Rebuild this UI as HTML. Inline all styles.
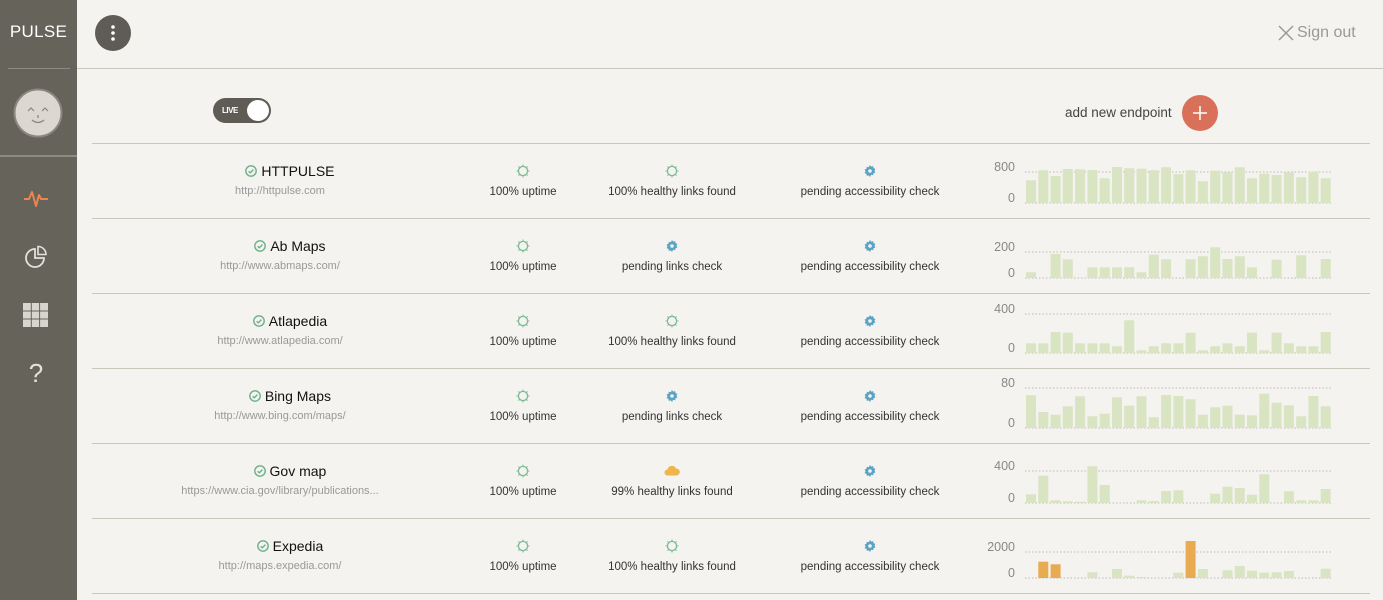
<!DOCTYPE html>
<html><head><meta charset="utf-8"><style>
*{margin:0;padding:0;box-sizing:border-box}
body{width:1383px;height:600px;overflow:hidden;background:#f4f3ef;font-family:"Liberation Sans",sans-serif;position:relative}
#side{position:absolute;left:0;top:0;width:77px;height:600px;background:#66635b}
.abs{position:absolute}
.t{position:absolute;text-align:center;white-space:nowrap}
</style></head><body>
<div id="side">
  <div class="t" style="left:0;width:77px;top:22px;color:#fff;font-size:17px;letter-spacing:0.3px">PULSE</div>
  <div class="abs" style="left:8px;top:68px;width:62px;height:1px;background:#8d8a82"></div>
  <svg class="abs" style="left:13px;top:88px" width="50" height="50"><circle cx="25" cy="25" r="23.5" fill="#dcd8d1" stroke="#8a8780" stroke-width="2"/><path d="M15 23l3-3 3 3M29 23l3-3 3 3" fill="none" stroke="#8a857c" stroke-width="1.2"/><path d="M25 27v3" stroke="#8a857c" stroke-width="1.3"/><path d="M19 32q6 5 12 0" fill="none" stroke="#8a857c" stroke-width="1.3"/></svg>
  <div class="abs" style="left:0;top:155px;width:77px;height:2px;background:#8d8a82"></div>
  <svg class="abs" style="left:23px;top:186px" width="26" height="24"><path d="M1 13h5l3-7 4 14 3-11 2 4h7" fill="none" stroke="#ea8550" stroke-width="2" stroke-linejoin="round"/></svg>
  <svg class="abs" style="left:24px;top:245px" width="26" height="26"><path d="M11 4a9 9 0 1 0 9 9h-9z" fill="none" stroke="#e4e1db" stroke-width="1.8"/><path d="M14 1.5a8 8 0 0 1 8 8h-8z" fill="none" stroke="#e4e1db" stroke-width="1.6"/></svg>
  <svg class="abs" style="left:23px;top:303px" width="26" height="25"><rect x="0" y="0" width="25" height="24" fill="#d8d5cf"/><path d="M8.3 0v24M16.6 0v24M0 8h25M0 16h25" stroke="#66635b" stroke-width="1"/></svg>
  <div class="t" style="left:0;width:72px;top:358px;color:#e4e1db;font-size:26px">?</div>
</div>
<svg class="abs" style="left:95px;top:15px" width="36" height="36"><circle cx="18" cy="18" r="18" fill="#5f5c55"/><circle cx="18" cy="12" r="1.8" fill="#fff"/><circle cx="18" cy="18" r="1.8" fill="#fff"/><circle cx="18" cy="24" r="1.8" fill="#fff"/></svg>
<svg class="abs" style="left:1278px;top:25px" width="16" height="16"><path d="M1 1l14 14M15 1L1 15" stroke="#999" stroke-width="1.5"/></svg>
<div class="t" style="left:1297px;top:24px;color:#999;font-size:16px">Sign out</div>
<div class="abs" style="left:77px;top:68px;width:1306px;height:1px;background:#c9c6be"></div>
<div class="abs" style="left:213px;top:98px;width:58px;height:25px;border-radius:13px;background:#5f5c55"></div>
<div class="t" style="left:222px;top:106px;color:#fff;font-size:8px;font-weight:bold;letter-spacing:-0.5px">LIVE</div>
<div class="abs" style="left:247px;top:100px;width:22px;height:21px;border-radius:50%;background:#fff"></div>
<div class="t" style="left:1065px;top:105px;color:#444;font-size:13.5px">add new endpoint</div>
<svg class="abs" style="left:1182px;top:95px" width="36" height="36"><circle cx="18" cy="18" r="18" fill="#d9705a"/><path d="M18 11v14M11 18h14" stroke="#fff" stroke-width="1.5"/></svg>
<div id="rows"></div>
<script>
var rows=[
["HTTPULSE","http://httpulse.com","100% healthy links found","g","800",158,[90,60,77,56,57,59,84,50,54,55,60,51,71,60,93,61,66,51,84,70,74,66,81,64,84],[]],
["Ab Maps","http://www.abmaps.com/","pending links check","p","200",383,[366,383,311,327,383,351,351,351,351,366,313,327,383,327,318,291,326,318,351,383,328,383,315,383,326],[]],
["Atlapedia","http://www.atlapedia.com/","100% healthy links found","g","400",158,[129,129,95,97,129,129,129,138,60,150,138,129,129,97,150,138,129,138,97,150,97,129,138,138,95],[]],
["Bing Maps","http://www.bing.com/maps/","pending links check","p","80",383,[285,335,343,318,288,348,340,291,316,288,351,284,287,297,343,321,316,343,345,280,307,315,348,287,318],[]],
["Gov map","https://www.cia.gov/library/publications...","99% healthy links found","c","400",143,[117,61,135,138,139,33,89,143,143,135,137,107,105,143,143,115,94,98,118,57,143,108,135,135,101],[]],
["Expedia","http://maps.expedia.com/","100% healthy links found","g","2000",367,[367,318,326,367,367,350,367,340,360,364,367,367,351,256,340,367,344,331,345,351,350,346,367,367,339],[1,2,13]]];
var ring='<svg width="14" height="14" viewBox="0 0 14 14"><circle cx="7" cy="7" r="4.6" fill="none" stroke="#7dbb95" stroke-width="1.3"/><path d="M7 0.5v2M7 11.5v2M0.5 7h2M11.5 7h2M2.4 2.4l1.4 1.4M10.2 10.2l1.4 1.4M2.4 11.6l1.4-1.4M10.2 3.8l1.4-1.4" stroke="#7dbb95" stroke-width="1"/></svg>';
var gear='<svg width="14" height="14" viewBox="0 0 14 14"><path d="M7 1l1.2 1.6 2-.5.3 2 1.9.8-.9 1.8.9 1.8-1.9.8-.3 2-2-.5L7 13l-1.2-1.6-2 .5-.3-2-1.9-.8.9-1.8-.9-1.8 1.9-.8.3-2 2 .5z" fill="#5aa3c4"/><circle cx="7" cy="7" r="1.8" fill="#f4f3ef"/></svg>';
var cloud='<svg width="16" height="12" viewBox="0 0 16 12"><path d="M3.5 11.5a3 3 0 0 1 0-6 4.5 4.5 0 0 1 8.5-1 3.5 3.5 0 0 1 0.5 7z" fill="#edb54a"/></svg>';
var check='<svg width="12" height="12" viewBox="0 0 12 12"><circle cx="6" cy="6" r="5.2" fill="none" stroke="#6db08a" stroke-width="1.4"/><path d="M3.6 6.2l1.7 1.6 3.1-3.2" fill="none" stroke="#6db08a" stroke-width="1.4"/></svg>';
var h='';
rows.forEach(function(r,i){
 var y=143+i*75;
 h+='<div class="abs" style="left:92px;top:'+y+'px;width:1278px;height:1px;background:#cbc7bc"></div>';
 h+='<div class="t" style="left:140px;width:300px;top:'+(y+20)+'px;font-size:14px;color:#111">'+check+' <span style="vertical-align:1px">'+r[0]+'</span></div>';
 h+='<div class="t" style="left:130px;width:300px;top:'+(y+42)+'px;font-size:11px;color:#999">'+r[1]+'</div>';
 h+='<div class="t" style="left:523px;width:0;top:'+(y+21)+'px"><div style="margin-left:-7px;width:14px">'+ring+'</div></div>';
 h+='<div class="t" style="left:423px;width:200px;top:'+(y+41)+'px;font-size:11.5px;color:#333;line-height:17px">100% uptime</div>';
 var ic=r[3]=='g'?ring:r[3]=='p'?gear:cloud;
 h+='<div class="t" style="left:572px;width:200px;top:'+(y+21)+'px;line-height:0">'+ic+'</div>';
 h+='<div class="t" style="left:572px;width:200px;top:'+(y+41)+'px;font-size:11.5px;color:#333;line-height:17px">'+r[2]+'</div>';
 h+='<div class="t" style="left:770px;width:200px;top:'+(y+21)+'px;line-height:0">'+gear+'</div>';
 h+='<div class="t" style="left:770px;width:200px;top:'+(y+41)+'px;font-size:11.5px;color:#333;line-height:17px">pending accessibility check</div>';
 var maxY=[29,34,21,20,28,34][i], zeroY=60;
 var s='<svg class="abs" style="left:980px;top:'+y+'px" width="360" height="75">';
 s+='<text x="35" y="'+(maxY-1)+'" text-anchor="end" font-size="12.5" fill="#888" font-family="Liberation Sans">'+r[4]+'</text>';
 s+='<text x="35" y="'+(zeroY-1)+'" text-anchor="end" font-size="12.5" fill="#888" font-family="Liberation Sans">0</text>';
 s+='<line x1="45" x2="352" y1="'+maxY+'" y2="'+maxY+'" stroke="#bbb" stroke-dasharray="1.5 2"/>';
 s+='<line x1="45" x2="352" y1="'+zeroY+'" y2="'+zeroY+'" stroke="#bbb" stroke-dasharray="1.5 2"/>';
 r[6].forEach(function(t,j){var hh=(r[5]-t)/3; if(hh<=0)return; var o=r[7].indexOf(j)>=0;
  s+='<rect x="'+(46+j*12.28).toFixed(1)+'" y="'+(zeroY-hh).toFixed(1)+'" width="10" height="'+hh.toFixed(1)+'" fill="'+(o?'#e8ab52':'#d9e4c3')+'"/>';});
 s+='</svg>';
 h+=s;
});
h+='<div class="abs" style="left:92px;top:593px;width:1278px;height:1px;background:#cbc7bc"></div>';
document.getElementById('rows').innerHTML=h;
</script>
</body></html>
